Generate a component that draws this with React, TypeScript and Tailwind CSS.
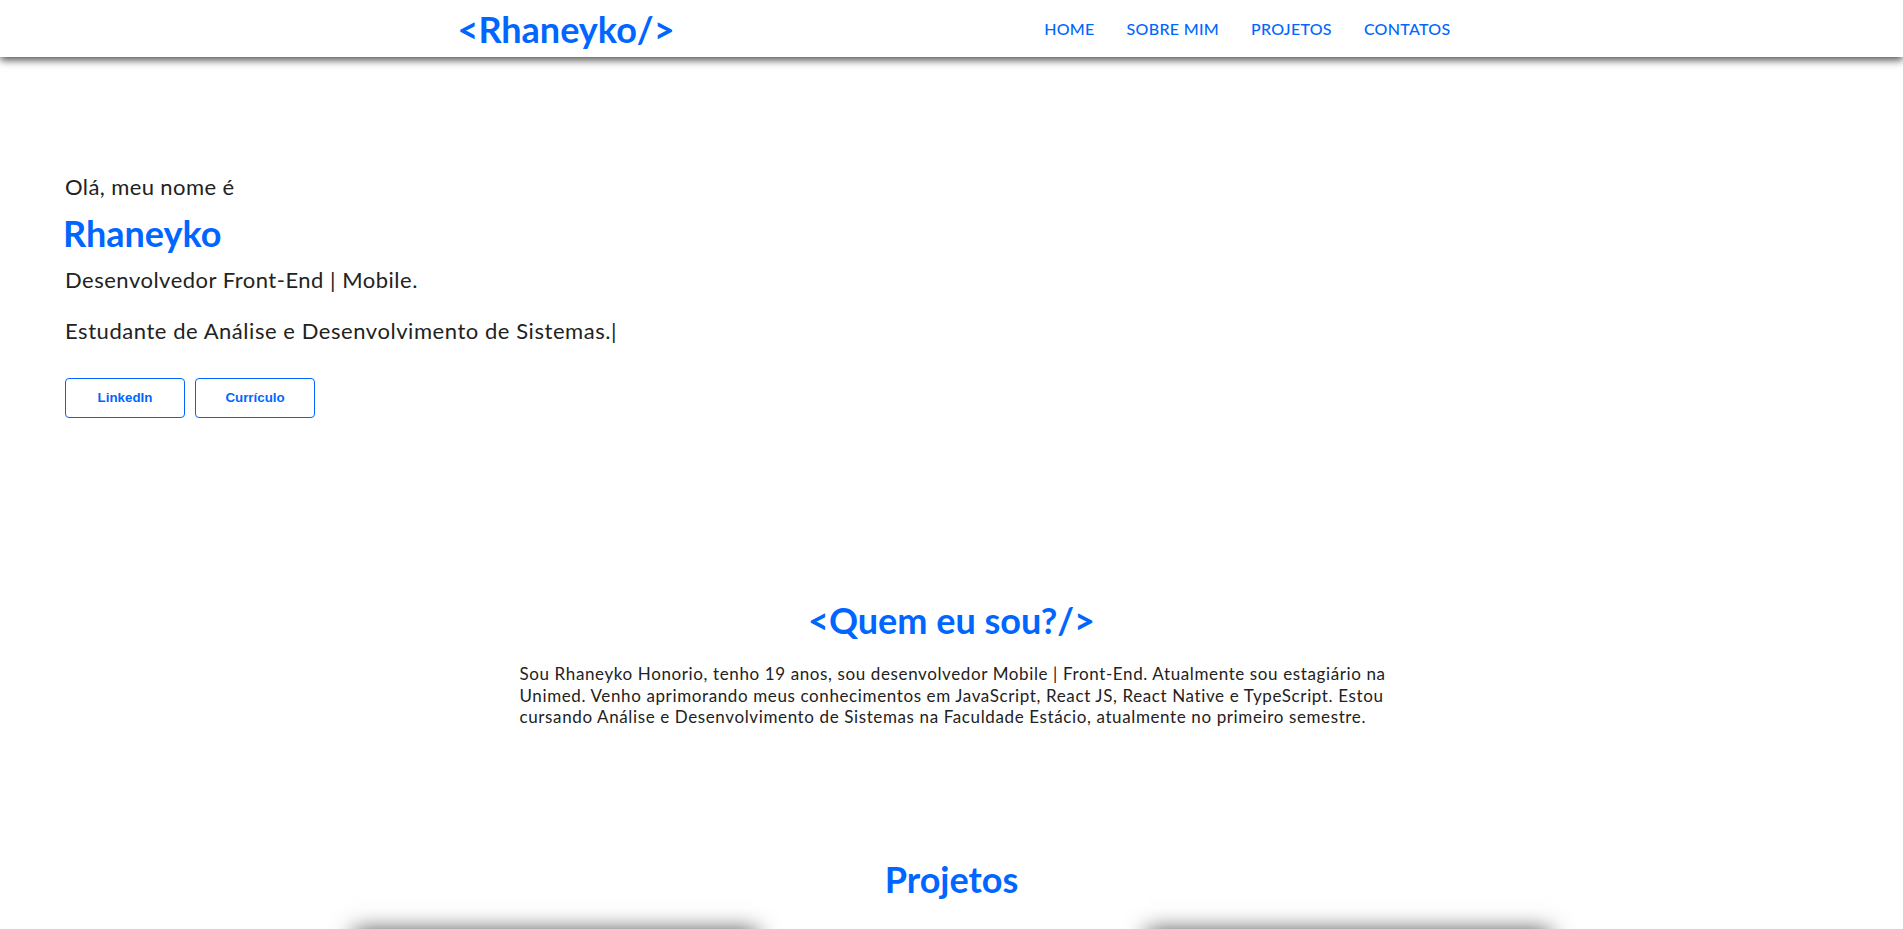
import React from 'react';

const blue = 'text-[#0066ff]';

const Header = () => {
  const links = ['HOME', 'SOBRE MIM', 'PROJETOS', 'CONTATOS'];
  return (
    <header className="h-[57px] bg-white shadow-[0_3px_8px_rgba(0,0,0,0.7)] relative z-10">
      <div className="w-[998px] mx-auto h-full flex justify-between items-center pl-[5px]">
        <h1 className={`text-[36px] font-bold leading-none ${blue}`}>&lt;Rhaneyko/&gt;</h1>
        <nav>
          <ul className="flex gap-[32px]">
            {links.map((l) => (
              <li key={l}>
                <a href="#" className={`text-[16px] font-medium tracking-[0.3px] ${blue}`}>
                  {l}
                </a>
              </li>
            ))}
          </ul>
        </nav>
      </div>
    </header>
  );
};

const Hero = () => (
  <section className="pl-[65px] pt-[117px]">
    <p className="text-[22px] leading-[26px] tracking-[0.4px] text-[#222]">Olá, meu nome é</p>
    <h2 className={`mt-[12px] -ml-[2px] text-[36px] leading-[43px] font-bold ${blue}`}>Rhaneyko</h2>
    <p className="mt-[12px] text-[22px] leading-[26px] tracking-[0.5px] text-[#222]">
      Desenvolvedor Front-End | Mobile.
    </p>
    <p className="mt-[25px] text-[22px] leading-[26px] tracking-[0.55px] text-[#222]">
      Estudante de Análise e Desenvolvimento de Sistemas.|
    </p>
    <div className="mt-[34px] flex gap-[10px]">
      <button className="w-[120px] h-[40px] border border-[#0066ff] rounded-[4px] bg-white text-[#0066ff] text-[13.33px] font-bold font-['Liberation_Sans',Arial,sans-serif]">
        LinkedIn
      </button>
      <button className="w-[120px] h-[40px] border border-[#0066ff] rounded-[4px] bg-white text-[#0066ff] text-[13.33px] font-bold font-['Liberation_Sans',Arial,sans-serif]">
        Currículo
      </button>
    </div>
  </section>
);

const About = () => (
  <section className="mt-[181px] flex flex-col items-center">
    <h2 className={`text-[36px] leading-[43px] font-bold ${blue}`}>&lt;Quem eu sou?/&gt;</h2>
    <p className="mt-[21px] w-[880px] pl-[8px] text-[17px] leading-[21.5px] tracking-[0.62px] text-[#222]">
      Sou Rhaneyko Honorio, tenho 19 anos, sou desenvolvedor Mobile | Front-End. Atualmente sou estagiário na
      Unimed. Venho aprimorando meus conhecimentos em JavaScript, React JS, React Native e TypeScript. Estou
      cursando Análise e Desenvolvimento de Sistemas na Faculdade Estácio, atualmente no primeiro semestre.
    </p>
  </section>
);

const Projects = () => (
  <section className="mt-[130px] flex flex-col items-center pb-20">
    <h2 className={`text-[36px] leading-[43px] font-bold ${blue}`}>Projetos</h2>
    <div className="mt-[30px] flex justify-center gap-[390px]">
      <div className="w-[403px] h-[320px] bg-white shadow-[0_0_22px_rgba(0,0,0,0.75)]"></div>
      <div className="w-[403px] h-[320px] bg-white shadow-[0_0_22px_rgba(0,0,0,0.75)]"></div>
    </div>
  </section>
);

export default function App() {
  return (
    <div className="min-h-screen bg-white font-['Lato','Noto_Sans',sans-serif]">
      <Header />
      <Hero />
      <About />
      <Projects />
    </div>
  );
}
